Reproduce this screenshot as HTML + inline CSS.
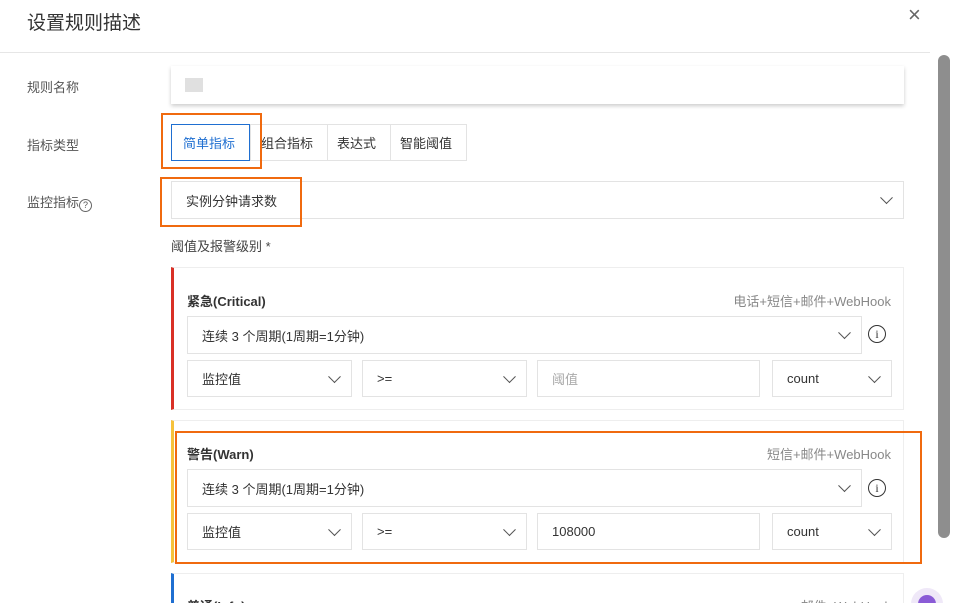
<!DOCTYPE html><html style="overflow:hidden;height:603px"><head><meta charset="utf-8"><style>
body{margin:0;width:965px;height:603px;overflow:hidden;background:#fff;font-family:"Liberation Sans","Noto Sans CJK SC",sans-serif;color:#333;position:relative}
.a{position:absolute;box-sizing:border-box}
.lbl{font-size:13px;color:#555}
.box{border:1px solid #e3e3e3;background:#fff;font-size:13px;color:#333;display:flex;align-items:center;padding-left:14px}
.chev{position:absolute;right:12px;top:50%;width:8px;height:8px;border-right:1.3px solid #555;border-bottom:1.3px solid #555;transform:translateY(-75%) rotate(45deg)}
.or{border:2.5px solid #f06a0f}
.info{width:18px;height:18px;border:1.3px solid #333;border-radius:50%;font-size:12px;text-align:center;line-height:17px;font-family:"Liberation Serif",serif}
</style></head><body>
<div class="a" style="left:27px;top:8px;font-size:19px;color:#333">设置规则描述</div>
<div class="a" style="left:908px;top:2px;font-size:22px;color:#666">×</div>
<div class="a" style="left:0;top:52px;width:930px;height:1px;background:#e6e6e6"></div>
<div class="a" style="left:938px;top:55px;width:12px;height:483px;background:#8e8e8e;border-radius:6px"></div>

<div class="a lbl" style="left:27px;top:77px">规则名称</div>
<div class="a" style="left:171px;top:66px;width:733px;height:38px;background:#fff;box-shadow:0 2px 4px rgba(0,0,0,.2)"></div>
<div class="a" style="left:185px;top:78px;width:18px;height:14px;background:#e0e0e0"></div>

<div class="a lbl" style="left:27px;top:135px">指标类型</div>
<div class="a box" style="left:250px;top:124px;width:78px;height:37px;padding-left:10px">组合指标</div>
<div class="a box" style="left:327px;top:124px;width:64px;height:37px;padding-left:9px">表达式</div>
<div class="a box" style="left:390px;top:124px;width:77px;height:37px;padding-left:9px">智能阈值</div>
<div class="a box" style="left:171px;top:124px;width:79px;height:37px;border-color:#1f6fd1;color:#1f6fd1;padding-left:11px">简单指标</div>
<div class="a or" style="left:161px;top:113px;width:101px;height:56px"></div>

<div class="a lbl" style="left:27px;top:192px">监控指标<span style="display:inline-block;width:11px;height:11px;border:1px solid #666;border-radius:50%;font-size:9px;line-height:11px;text-align:center;vertical-align:-1px">?</span></div>
<div class="a box" style="left:171px;top:181px;width:733px;height:38px"><span>实例分钟请求数</span><i class="chev"></i></div>
<div class="a or" style="left:160px;top:177px;width:142px;height:50px"></div>
<div class="a lbl" style="left:171px;top:236px;color:#444">阈值及报警级别 *</div>

<div class="a" style="left:171px;top:267px;width:733px;height:143px;border:1px solid #eee;border-left:3px solid #d93026"></div>
<div class="a" style="left:187px;top:291px;font-size:13px;font-weight:bold">紧急(Critical)</div>
<div class="a" style="left:700px;top:291px;width:191px;text-align:right;font-size:13px;color:#888">电话+短信+邮件+WebHook</div>
<div class="a box" style="left:187px;top:316px;width:675px;height:38px">连续 3 个周期(1周期=1分钟)<i class="chev"></i></div>
<div class="a info" style="left:868px;top:325px">i</div>
<div class="a box" style="left:187px;top:360px;width:165px;height:37px">监控值<i class="chev"></i></div>
<div class="a box" style="left:362px;top:360px;width:165px;height:37px">&gt;=<i class="chev"></i></div>
<div class="a box" style="left:537px;top:360px;width:223px;height:37px;color:#aaa">阈值</div>
<div class="a box" style="left:772px;top:360px;width:120px;height:37px">count<i class="chev"></i></div>

<div class="a" style="left:171px;top:420px;width:733px;height:143px;border:1px solid #eee;border-left:3px solid #f6c23b"></div>
<div class="a" style="left:187px;top:444px;font-size:13px;font-weight:bold">警告(Warn)</div>
<div class="a" style="left:700px;top:444px;width:191px;text-align:right;font-size:13px;color:#888">短信+邮件+WebHook</div>
<div class="a box" style="left:187px;top:469px;width:675px;height:38px">连续 3 个周期(1周期=1分钟)<i class="chev"></i></div>
<div class="a info" style="left:868px;top:479px">i</div>
<div class="a box" style="left:187px;top:513px;width:165px;height:37px">监控值<i class="chev"></i></div>
<div class="a box" style="left:362px;top:513px;width:165px;height:37px">&gt;=<i class="chev"></i></div>
<div class="a box" style="left:537px;top:513px;width:223px;height:37px">108000</div>
<div class="a box" style="left:772px;top:513px;width:120px;height:37px">count<i class="chev"></i></div>
<div class="a or" style="left:175px;top:431px;width:747px;height:133px"></div>

<div class="a" style="left:171px;top:573px;width:733px;height:40px;border:1px solid #eee;border-left:3px solid #1f6fd1;border-bottom:none"></div>
<div class="a" style="left:187px;top:596px;font-size:13px;font-weight:bold">普通(Info)</div>
<div class="a" style="left:700px;top:596px;width:191px;text-align:right;font-size:13px;color:#888">邮件+WebHook</div>
<div class="a" style="left:911px;top:588px;width:32px;height:32px;border-radius:50%;background:#efe8f8"></div>
<div class="a" style="left:918px;top:595px;width:18px;height:18px;border-radius:50%;background:#8a5bd6"></div>
</body></html>
